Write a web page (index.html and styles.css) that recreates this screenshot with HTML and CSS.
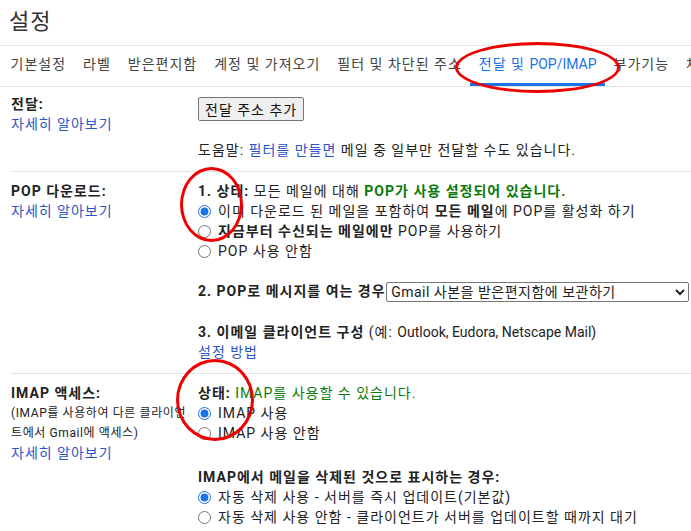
FILE: index.html
```html
<!DOCTYPE html>
<html lang="ko">
<head>
    <meta charset="UTF-8">
    <meta name="viewport" content="width=device-width, initial-scale=1.0">
    <title>설정 - 전달 및 POP/IMAP</title>
    <link rel="stylesheet" href="styles.css">
</head>
<body>
    <div class="title">설정</div>
    <nav class="tabs">
        <a class="tab">기본설정</a>
        <a class="tab">라벨</a>
        <a class="tab">받은편지함</a>
        <a class="tab">계정 및 가져오기</a>
        <a class="tab">필터 및 차단된 주소</a>
        <a class="tab active">전달 및 <span class="en">POP/IMAP</span></a>
        <a class="tab">부가기능</a>
        <a class="tab">채팅 및 Meet</a>
    </nav>

    <div class="section forward">
        <div class="label">
            <b>전달:</b><br>
            <a href="#" class="link">자세히 알아보기</a>
        </div>
        <div class="body">
            <button type="button" class="btn">전달 주소 추가</button>
            <div class="help">도움말: <a href="#" class="link">필터를 만들면</a> 메일 중 일부만 전달할 수도 있습니다.</div>
        </div>
    </div>

    <div class="section">
        <div class="label">
            <b>POP 다운로드:</b><br>
            <a href="#" class="link">자세히 알아보기</a>
        </div>
        <div class="body">
            <div><b>1. 상태:</b> 모든 메일에 대해 <b class="ok">POP가 사용 설정되어 있습니다.</b></div>
            <label class="radio"><input type="radio" name="pop" checked> <span>이미 다운로드 된 메일을 포함하여 <b>모든 메일</b>에 POP를 활성화 하기</span></label>
            <label class="radio"><input type="radio" name="pop"> <span><b>지금부터 수신되는 메일에만</b> POP를 사용하기</span></label>
            <label class="radio"><input type="radio" name="pop"> <span>POP 사용 안함</span></label>
            <div class="step"><b>2. POP로 메시지를 여는 경우</b>
                <select class="select">
                    <option>Gmail 사본을 받은편지함에 보관하기</option>
                    <option>Gmail 사본을 읽은 상태로 표시하기</option>
                    <option>Gmail 사본을 보관처리하기</option>
                    <option>Gmail 사본 삭제하기</option>
                </select>
            </div>
            <div class="step"><b>3. 이메일 클라이언트 구성</b> (예: <span class="en">Outlook, Eudora, Netscape Mail)</span></div>
            <a href="#" class="link">설정 방법</a>
        </div>
    </div>

    <div class="section last">
        <div class="label">
            <b>IMAP 액세스:</b>
            <div class="note">(IMAP를 사용하여 다른 클라이언트에서 Gmail에 액세스)</div>
            <a href="#" class="link">자세히 알아보기</a>
        </div>
        <div class="body">
            <div><b>상태:</b> <span class="ok">IMAP를 사용할 수 있습니다.</span></div>
            <label class="radio"><input type="radio" name="imap" checked> <span>IMAP 사용</span></label>
            <label class="radio"><input type="radio" name="imap"> <span>IMAP 사용 안함</span></label>
            <div class="step gap"><b>IMAP에서 메일을 삭제된 것으로 표시하는 경우:</b></div>
            <label class="radio"><input type="radio" name="expunge" checked> <span>자동 삭제 사용 - 서버를 즉시 업데이트(기본값)</span></label>
            <label class="radio"><input type="radio" name="expunge"> <span>자동 삭제 사용 안함 - 클라이언트가 서버를 업데이트할 때까지 대기</span></label>
        </div>
    </div>

    <div class="mark mark-tab"></div>
    <div class="mark mark-pop"></div>
    <div class="mark mark-imap"></div>
</body>
</html>
```

FILE: styles.css
```css
body {
    margin: 0;
    font-family: Roboto, "Noto Sans CJK KR", sans-serif;
    font-size: 14px;
    line-height: 20px;
    letter-spacing: 1px;
    color: #222;
    background: white;
    position: relative;
    overflow: hidden;
}
b {
    font-weight: bold;
}
.en {
    letter-spacing: 0;
}
.title {
    font-size: 22px;
    line-height: 30px;
    padding: 7px 0 0 9px;
    box-sizing: border-box;
    height: 46px;
    color: #333;
    border-bottom: 1px solid #e6e6e6;
}
.tabs {
    display: flex;
    white-space: nowrap;
    height: 41px;
    box-sizing: border-box;
    padding-left: 2px;
    border-bottom: 1px solid #e3e3e3;
    overflow: hidden;
}
.tab {
    flex-shrink: 0;
    padding: 0 8.5px;
    line-height: 37px;
    border-bottom: 3px solid transparent;
    color: #444;
}
.tab.active {
    color: #1a73e8;
    border-bottom-color: #1a73e8;
}
.section {
    display: grid;
    grid-template-columns: 187px 1fr;
    margin-left: 11px;
    padding: 9px 0 11px;
    border-bottom: 1px solid #e3e3e3;
    white-space: nowrap;
}
.section.forward {
    padding-top: 7px;
}
.section.last {
    border-bottom: none;
}
.link {
    color: #2a55c8;
    text-decoration: none;
}
.label .note {
    font-size: 12px;
    letter-spacing: 0.6px;
    white-space: normal;
    width: 182px;
    color: #222;
}
.body {
    display: flex;
    flex-direction: column;
    align-items: flex-start;
}
.btn {
    margin-top: 3px;
    height: 24px;
    padding: 0 6px;
    font-family: inherit;
    font-size: 14px;
    letter-spacing: 1px;
    color: #111;
    background: #efefef;
    border: 1px solid #767676;
    border-radius: 2px;
}
.help {
    margin-top: 19px;
}
.ok {
    color: #0a7a0a;
}
.radio {
    display: flex;
    align-items: center;
    gap: 7px;
    height: 20px;
}
.radio input {
    margin: 0;
    width: 13px;
    height: 13px;
    accent-color: #1a73e8;
}
.step {
    margin-top: 20px;
}
.step.gap {
    margin-top: 24px;
}
.select {
    width: 303px;
    height: 20px;
    margin-left: -4px;
    font-family: inherit;
    font-size: 14px;
    letter-spacing: 0.5px;
    color: #222;
    border: 1px solid #767676;
    border-radius: 2px;
    background: white;
    vertical-align: top;
    margin-top: 1px;
}
.mark {
    position: absolute;
    border: 3px solid #ee0000;
    border-radius: 50%;
    box-sizing: border-box;
    pointer-events: none;
}
.mark-tab {
    left: 455px;
    top: 42px;
    width: 165px;
    height: 51px;
}
.mark-pop {
    left: 180px;
    top: 167px;
    width: 63px;
    height: 75px;
}
.mark-imap {
    left: 176px;
    top: 359px;
    width: 78px;
    height: 82px;
}
```
